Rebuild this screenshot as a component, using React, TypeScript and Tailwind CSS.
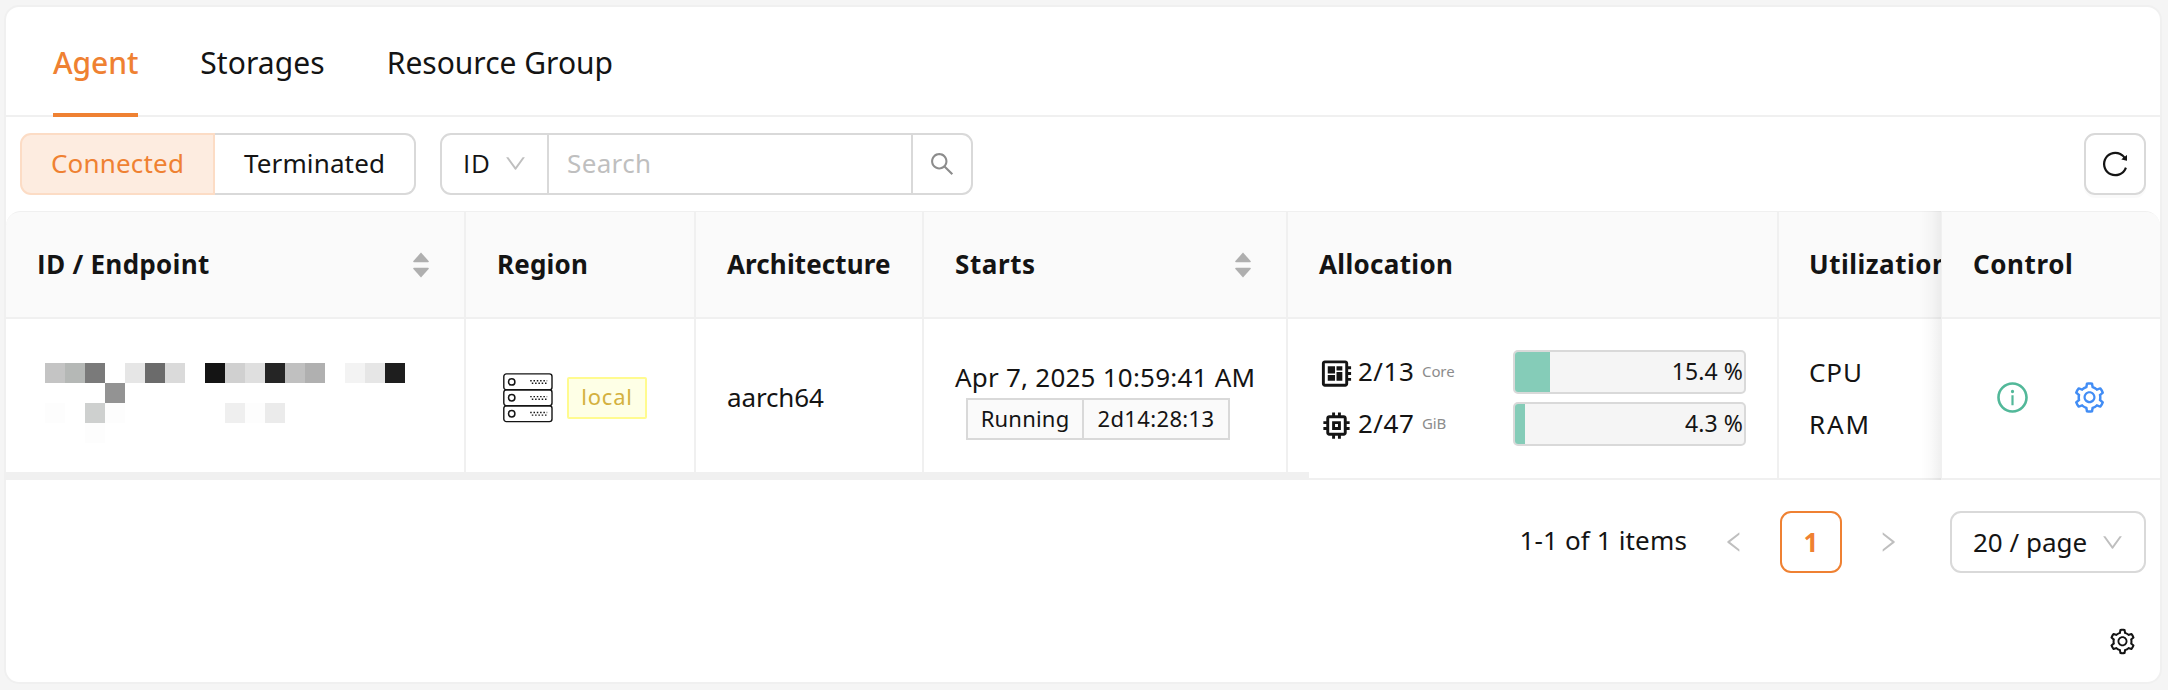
import type { ReactNode } from 'react';
import {
  AiOutlineDown,
  AiOutlineInfoCircle,
  AiOutlineLeft,
  AiOutlineReload,
  AiOutlineRight,
  AiOutlineSearch,
  AiOutlineSetting,
} from 'react-icons/ai';
import { MdMemory, MdOutlineDeveloperBoard } from 'react-icons/md';

const COLUMNS = 'grid grid-cols-[460px_230px_228px_364px_491px_162px_219px]';

function Sorter() {
  return (
    <svg className="h-[26px] w-4 shrink-0" viewBox="0 0 16 26" fill="#afafaf">
      <path d="M8 0.5 15.6 9a.8.8 0 0 1-.6 1.2H1A.8.8 0 0 1 .4 9z" />
      <path d="M8 25.5.4 17A.8.8 0 0 1 1 15.8h14a.8.8 0 0 1 .6 1.2z" />
    </svg>
  );
}

function HeaderCell({ children, sortable = false }: { children: ReactNode; sortable?: boolean }) {
  return (
    <div className="flex items-center justify-between border-r-2 border-[#f0f0f0] pr-[35px] pl-[31px] font-bold whitespace-nowrap">
      {children}
      {sortable && <Sorter />}
    </div>
  );
}

function Cell({ children }: { children: ReactNode }) {
  return (
    <div className="flex items-center border-r-2 border-[#f0f0f0] pb-[2px] pl-[31px] whitespace-nowrap">{children}</div>
  );
}

const MASK: string[][] = [
  ['#c4c4c4', '#b5b8b6', '#7a7a7a', '', '#e6e6e6', '#6b6b6b', '#dadada', '', '#141414', '#d0d0d0', '#dfdfdf', '#252525', '#c0c0c0', '#b0b0b0', '', '#f3f3f3', '#e6e6e6', '#1e1e1e'],
  ['', '', '', '#939393', '', '', '', '', '', '', '', '', '', '', '', '', '', ''],
  ['#fdfdfd', '', '#ced0cf', '#fdfdfd', '', '', '', '', '', '#efefef', '#fdfdfd', '#ebebeb', '', '', '', '', '', ''],
  ['', '', '#fdfdfd', '', '', '', '', '', '', '', '', '', '', '', '', '', '', ''],
];

function MaskedEndpoint() {
  return (
    <div className="mt-[11px] ml-[8px] grid grid-cols-[repeat(18,20px)] grid-rows-[repeat(4,20px)]">
      {MASK.flat().map((color, i) => (
        <span key={i} style={{ backgroundColor: color || undefined }} />
      ))}
    </div>
  );
}

function ServerIcon() {
  return (
    <svg className="h-[50px] w-[50px] shrink-0" viewBox="0 0 50 50" fill="none" stroke="#141414">
      {[0, 1, 2].map((i) => (
        <g key={i} transform={`translate(0 ${i * 15.9})`}>
          <rect x="0.8" y="0.9" width="48.2" height="15.9" rx="2.6" strokeWidth="1.4" />
          <circle cx="8.7" cy="8.9" r="3.2" strokeWidth="1.5" />
          <path d="M27.2 7.7h17" strokeWidth="1.4" strokeDasharray="1.5 1.8" />
          <path d="M28.8 10.3h16" strokeWidth="1.4" strokeDasharray="1.5 1.8" />
        </g>
      ))}
    </svg>
  );
}

function Usage({ percent, label }: { percent: number; label: string }) {
  return (
    <div className="relative flex h-11 w-[233px] items-center justify-end overflow-hidden rounded-[5px] border-2 border-[#d9d9d9] bg-[#f5f5f5] pr-px">
      <div className="absolute inset-y-0 left-0 bg-[#85ccb8]" style={{ width: `${percent}%` }} />
      <span className="relative text-[23px] leading-none tracking-[0.08px]">{label}</span>
    </div>
  );
}

function AllocationRow({ icon, value, unit, percent, label }: { icon: ReactNode; value: string; unit: string; percent: number; label: string }) {
  return (
    <div className="flex h-11 items-center">
      {icon}
      <span className="ml-1 w-16 tracking-[0.5px]">{value}</span>
      <span className="w-[91px] text-[15px] tracking-[-0.1px] text-[#8c8c8c]">{unit}</span>
      <Usage percent={percent} label={label} />
    </div>
  );
}

export default function App() {
  return (
    <div className="h-[690px] w-[2168px] bg-[#f5f5f5] pt-[5px] pr-[6px] pb-[6px] pl-[4px] font-['Noto_Sans',sans-serif] text-[26px] text-[#141414]">
      <div className="flex h-full flex-col overflow-hidden rounded-[15px] border-2 border-[#f0f0f0] bg-white">
        <nav className="flex h-[110px] shrink-0 gap-[62px] border-b-2 border-[#f0f0f0] pl-[47px] text-[30px]">
          <div className="relative flex items-center pt-[3px] font-medium text-[#ef8132]">
            <span className="tracking-[-0.1px]">Agent</span>
            <span className="absolute inset-x-0 -bottom-[2px] h-1 bg-[#ef8132]" />
          </div>
          <div className="flex items-center pt-[3px] tracking-[0.08px]">Storages</div>
          <div className="flex items-center pt-[3px]">Resource Group</div>
        </nav>

        <div className="flex h-[94px] shrink-0 items-center justify-between px-[14px]">
          <div className="flex gap-6">
            <div className="flex h-[62px]">
              <div className="flex w-[195px] items-center justify-center rounded-l-[11px] border-2 border-[#fcdcc5] bg-[#fdece0] pb-px tracking-[0.19px] text-[#ef8132]">
                Connected
              </div>
              <div className="flex w-[201px] items-center justify-center rounded-r-[11px] border-2 border-l-0 border-[#d9d9d9] pb-px tracking-[0.14px]">
                Terminated
              </div>
            </div>
            <div className="flex h-[62px] w-[533px] rounded-[11px] border-2 border-[#d9d9d9]">
              <div className="flex w-[107px] items-center justify-between border-r-2 border-[#d9d9d9] pr-[19px] pb-px pl-[21px]">
                <span className="font-['Open_Sans',sans-serif] tracking-[0.7px]">ID</span>
                <AiOutlineDown className="size-[25px] text-[#bfbfbf]" />
              </div>
              <div className="flex flex-1 items-center pb-px pl-[18px] tracking-[0.36px] text-[#bfbfbf]">Search</div>
              <div className="flex w-[60px] items-center justify-center border-l-2 border-[#d9d9d9] pb-px">
                <AiOutlineSearch className="size-[28px] text-[#8c8c8c]" />
              </div>
            </div>
          </div>
          <div className="flex size-[62px] items-center justify-center rounded-[11px] border-2 border-[#d9d9d9] shadow-[0_3px_0_rgba(0,0,0,0.02)]">
            <AiOutlineReload className="size-[30px]" />
          </div>
        </div>

        <div className="relative shrink-0">
          <div className={`${COLUMNS} h-[108px] overflow-hidden rounded-t-[15px] border-t border-b-2 border-[#f0f0f0] bg-[#fafafa]`}>
            <HeaderCell sortable>
              <span className="font-['Open_Sans',sans-serif] tracking-[0.27px]">ID / Endpoint</span>
            </HeaderCell>
            <HeaderCell><span className="tracking-[0.19px]">Region</span></HeaderCell>
            <HeaderCell><span className="tracking-[0.12px]">Architecture</span></HeaderCell>
            <HeaderCell sortable><span className="tracking-[0.58px]">Starts</span></HeaderCell>
            <HeaderCell><span className="tracking-[0.33px]">Allocation</span></HeaderCell>
            <div className="flex items-center overflow-hidden pl-[30px] font-bold tracking-[0.5px]">Utilization</div>
            <div className="flex items-center border-l border-[#f0f0f0] bg-[#fafafa] pl-[31px] font-bold tracking-[0.59px]">Control</div>
          </div>
          <div className={`${COLUMNS} h-[161px] border-b-2 border-[#f0f0f0]`}>
            <Cell><MaskedEndpoint /></Cell>
            <Cell>
              <div className="ml-[6px] flex items-center gap-[14px]">
                <ServerIcon />
                <span className="flex h-[42px] w-20 items-center justify-center rounded-[2px] border-2 border-[#fffb8f] bg-[#feffe6] pb-[2px] text-[22px] tracking-[0.78px] text-[#d4b13f]">
                  local
                </span>
              </div>
            </Cell>
            <Cell><span className="tracking-[-0.14px]">aarch64</span></Cell>
            <Cell>
              <div className="flex flex-col">
                <span className="h-[42px] leading-[42px] tracking-[0.23px]">Apr 7, 2025 10:59:41 AM</span>
                <div className="ml-[11px] flex h-[42px] text-[22px]">
                  <span className="flex w-[118px] items-center justify-center border-2 border-[#d9d9d9] bg-[#fafafa] tracking-[0.21px]">Running</span>
                  <span className="flex w-[146px] items-center justify-center border-2 border-l-0 border-[#d9d9d9] bg-[#fafafa] tracking-[0.35px]">2d14:28:13</span>
                </div>
              </div>
            </Cell>
            <Cell>
              <div className="flex flex-col gap-2">
                <AllocationRow icon={<MdOutlineDeveloperBoard className="size-[35px] translate-y-[2px]" />} value="2/13" unit="Core" percent={15.4} label="15.4 %" />
                <AllocationRow icon={<MdMemory className="size-[35px] translate-y-[2px]" />} value="2/47" unit="GiB" percent={4.3} label="4.3 %" />
              </div>
            </Cell>
            <div className="flex flex-col justify-center gap-2 pb-[2px] pl-[30px]">
              <span className="h-11 leading-[44px] tracking-[0.9px]">CPU</span>
              <span className="h-11 leading-[44px] tracking-[1.9px]">RAM</span>
            </div>
            <div className="flex items-center justify-center gap-[42px] border-l border-[#f0f0f0] pb-[2px]">
              <AiOutlineInfoCircle className="size-[35px] text-[#52b899]" />
              <AiOutlineSetting className="size-[35px] text-[#428df5]" />
            </div>
          </div>
          <div className="absolute top-0 right-[219px] bottom-0 w-5 bg-linear-to-l from-black/6 via-black/2 to-transparent" />
          <div className="absolute bottom-0 left-0 h-2 w-[1303px] bg-[#f0f0f0]" />
        </div>

        <div className="mt-[31px] mr-[14px] flex h-[62px] shrink-0 items-center justify-end">
          <span className="mr-[34px] pb-1 tracking-[0.15px]">1-1 of 1 items</span>
          <AiOutlineLeft className="size-[26px] text-[#bfbfbf]" />
          <span className="mx-[33px] flex size-[62px] items-center justify-center rounded-[11px] border-2 border-[#ef8132] font-bold text-[#ef8132]">1</span>
          <AiOutlineRight className="size-[26px] text-[#bfbfbf]" />
          <div className="ml-[49px] flex h-[62px] w-[196px] items-center justify-between rounded-[11px] border-2 border-[#d9d9d9] pr-[19px] pl-[21px]">
            <span>20 / page</span>
            <AiOutlineDown className="size-[25px] text-[#bfbfbf]" />
          </div>
        </div>

        <div className="mt-[54px] mr-[23px] flex justify-end">
          <AiOutlineSetting className="size-[29px]" />
        </div>
      </div>
    </div>
  );
}
